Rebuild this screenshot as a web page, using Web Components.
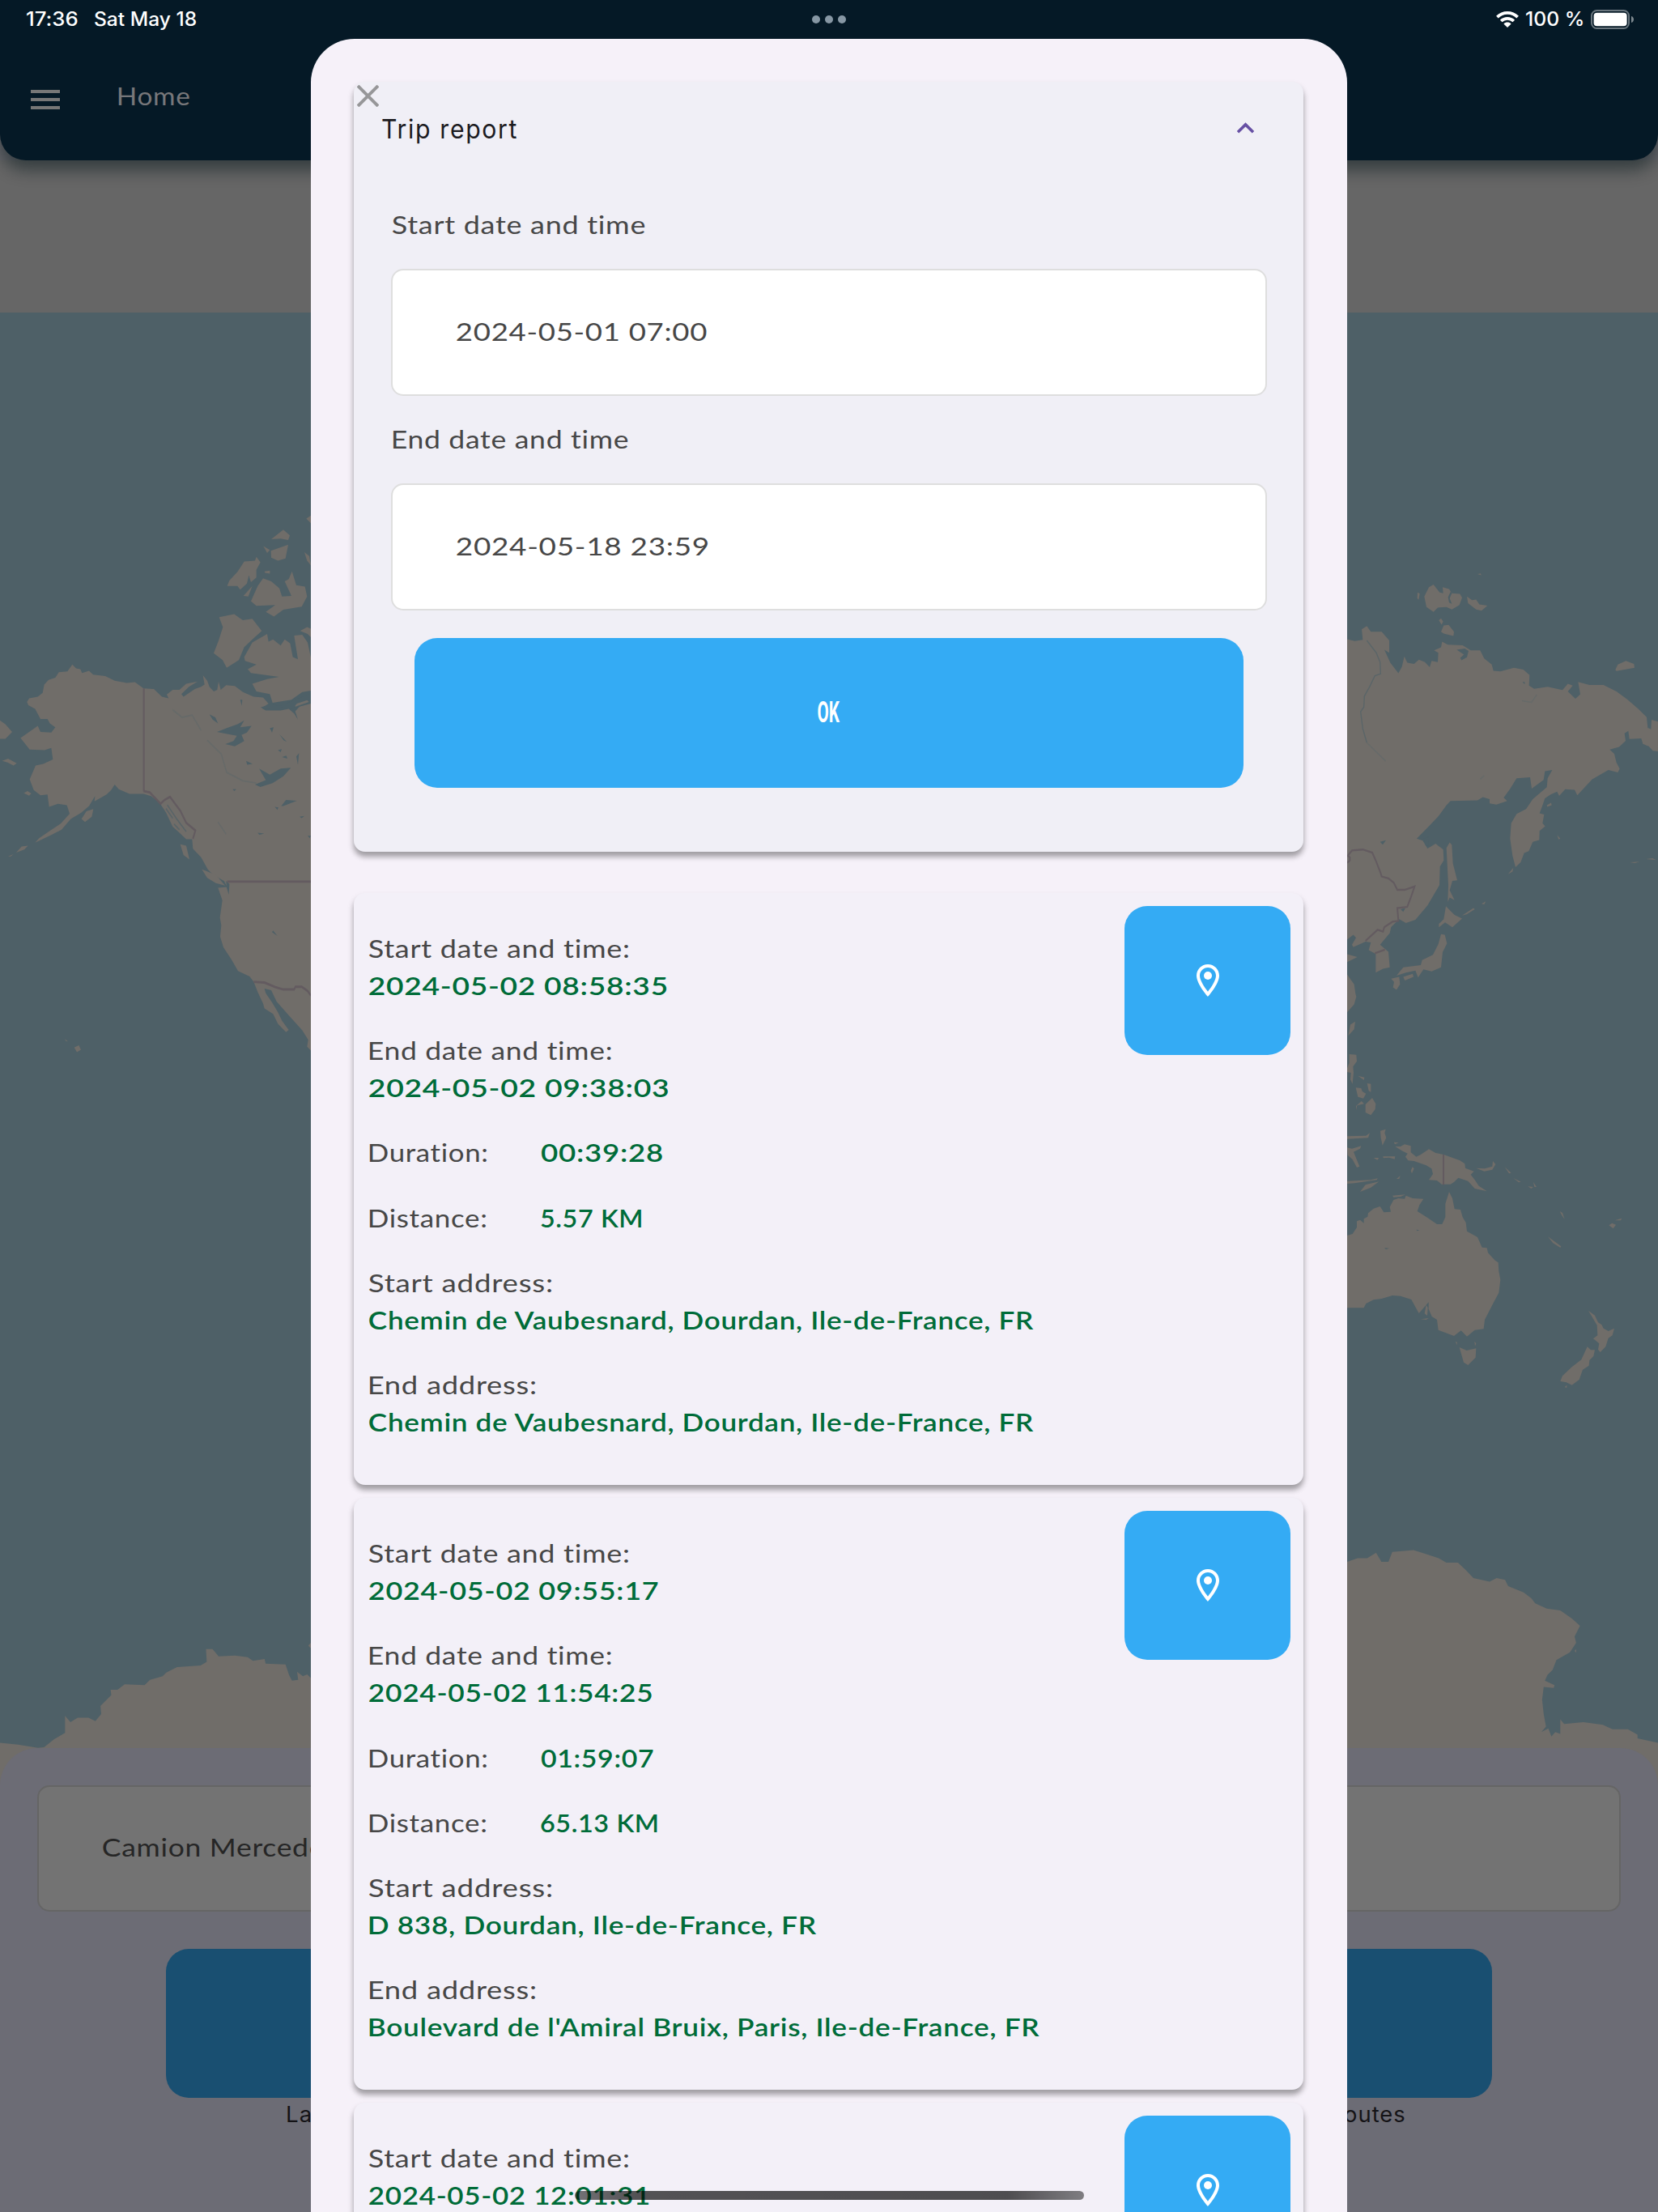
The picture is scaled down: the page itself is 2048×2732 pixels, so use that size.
<!DOCTYPE html>
<html lang="en">
<head>
<meta charset="utf-8">
<title>Trip report</title>
<style>
html,body{margin:0;padding:0}
body{width:2048px;height:2732px;overflow:hidden;font-family:Lato,"Open Sans",sans-serif;font-size:31px;line-height:46px;letter-spacing:.6px;font-variant-ligatures:none;color:#474747;background:#6c6c75}
</style>
</head>
<body>
<tracker-app></tracker-app>
<script>
const define = (name, html, setup) => {
  const tpl = document.createElement('template');
  tpl.innerHTML = html;
  customElements.define(name, class extends HTMLElement {
    connectedCallback() {
      if (this.shadowRoot) return;
      const root = this.attachShadow({ mode: 'open' });
      const view = tpl.content.cloneNode(true);
      view.querySelectorAll('[data-if]').forEach(n => {
        if (!this.hasAttribute(n.dataset.if)) n.remove();
      });
      view.querySelectorAll('[data-attr]').forEach(n => {
        n.textContent = this.getAttribute(n.dataset.attr) || '';
      });
      view.querySelectorAll('[data-w]').forEach(n => {
        n.setAttribute('w', this.getAttribute(n.dataset.w) || '');
      });
      root.append(view);
      if (setup) setup(this, root);
    }
  });
};

/* A line of text stretched so its ink spans exactly w pixels. */
define('fit-text', `
<style>
:host{display:block;white-space:nowrap;flex:none}
span{display:inline-block;transform-origin:0 50%;white-space:pre}
</style><span><slot></slot></span>`, (el, root) => {
  const w = parseFloat(el.getAttribute('w'));
  if (!w) return;
  const cs = getComputedStyle(el);
  const ctx = document.createElement('canvas').getContext('2d');
  ctx.font = `${cs.fontWeight} ${cs.fontSize} ${cs.fontFamily}`;
  const ls = parseFloat(cs.letterSpacing) || 0;
  ctx.letterSpacing = ls + 'px';
  const m = ctx.measureText(el.textContent);
  const ink = m.actualBoundingBoxLeft + m.actualBoundingBoxRight;
  const k = w / ink;
  el.style.width = w + 'px';
  root.querySelector('span').style.transform = `translateX(${m.actualBoundingBoxLeft * k}px) scaleX(${k})`;
});

define('status-bar', `
<style>
:host{display:flex;height:48px;align-items:center;justify-content:space-between;box-sizing:border-box;padding:0 29px 0 29px;
 font-family:Inter,sans-serif;font-weight:500;font-size:24px;line-height:48px;letter-spacing:0;color:#fff}
.l{display:flex;gap:21.5px;width:896.500px;padding-left:3.500px}
.r{display:flex;align-items:center;justify-content:flex-end;width:900px}
.r fit-text{margin:0 10px 0 9px}
.dots{display:flex;gap:6px}
.dots i{width:10px;height:10px;border-radius:50%;background:#8797a4}
svg{display:block}
</style>
<div class="l"><fit-text w="62.5">17:36</fit-text><fit-text w="125">Sat May 18</fit-text></div>
<div class="dots"><i></i><i></i><i></i></div>
<div class="r">
<svg width="28" height="20" viewBox="0 0 28 20" fill="none" stroke="#fff" stroke-width="3.8"><path d="M1.4 7.2C8.4.2 19.6.2 26.6 7.2"/><path d="M6.2 12c4.400-4.300 11.200-4.300 15.600 0"/><path d="M14 20l-4.600-4.600c2.600-2.400 6.600-2.400 9.200 0z" fill="#fff" stroke="none"/></svg>
<fit-text w="70.5">100 %</fit-text>
<svg width="54" height="24" viewBox="0 0 54 24"><rect x="1" y="1" width="46" height="22" rx="6.500" fill="none" stroke="#69757d" stroke-width="2"/><rect x="3.600" y="3.700" width="41" height="16.600" rx="4" fill="#fff"/><path d="M50 8c4 1 4 7 0 8z" fill="#7d888f"/></svg>
</div>`);

define('app-header', `
<style>
:host{display:block;position:relative;height:198px;background:#051926;border-radius:0 0 32px 32px;box-shadow:0 12px 20px rgba(0,18,24,.48)}
.row{display:flex;align-items:flex-start;padding:46.500px 0 0 38px;gap:71.500px}
svg{display:block;margin-top:16.500px}
fit-text{color:#77777a}
</style>
<status-bar></status-bar>
<div class="row">
<svg width="36" height="24" fill="#777"><rect width="36" height="4"/><rect y="10" width="36" height="4"/><rect y="20" width="36" height="4"/></svg>
<fit-text w="88.5">Home</fit-text></div>`);

define('world-map', `
<style>:host{display:block;height:1824px;background:#4e6067}svg{display:block}.b{fill:none;stroke:#635b60;stroke-width:6}.w{fill:#4e6067}.r{fill:none;stroke:#666a69;stroke-width:4}</style>
<svg width="2048" height="1824" viewBox="0 386 2048 1824" fill="#706d69">
<g transform="translate(0 600) scale(.33333 .47194)">
<path d="M100 566L108 556 140 552 158 542 164 520 180 508 205 502 218 488 250 486 268 468 282 478 298 480 304 490 330 484 345 494 390 498 425 510 470 516 500 514 532 530 570 532 600 552 625 556 618 546 640 534 665 534 690 518 732 512 700 526 672 545 680 552 722 532 745 526 758 520 752 496 768 510 776 526 792 538 805 534 810 512 818 534 838 522 870 524 900 540 940 552 975 554 995 570 970 582 985 588 1040 588 1070 584 1090 596 1104 612 1094 590 1110 578 1152 570 1152 1478 1138 1468 1142 1450 1120 1425 1070 1386 1025 1350 1005 1320 980 1316 985 1328 1008 1352 1030 1378 1045 1400 1070 1424 1060 1430 1030 1408 1012 1382 980 1368 975 1355 955 1325 940 1298 925 1284 882 1270 858 1240 828 1208 816 1180 820 1150 815 1130 824 1085 808 1052 842 1050 830 1034 790 1018 770 1004 745 972 715 950 712 925 690 925 660 905 640 892 615 855 590 828 560 812 532 806 480 806 440 794 425 782 412 796 395 808 350 826 352 812 330 838 300 856 262 872 228 900 190 914 160 924 130 934 145 922 182 904 225 884 258 858 248 836 215 832 182 840 176 808 150 810 125 796 110 768 132 732 160 728 196 716 190 686 165 692 110 690 76 660 105 646 140 628 150 644 190 646 205 632 185 622 176 610 150 610 130 584 105 574Z"/>
<path d="M812 344L868 336 900 352 935 348 970 380 935 402 905 422 885 456 840 476 825 456 792 438 810 405 826 370ZM905 448L935 410 990 388 995 408 1012 402 1040 418 1055 402 1075 412 1085 448 1104 454 1090 392 1120 390 1140 410 1152 450V536L1120 540 1080 560 1010 568 1000 545 950 538 935 518 990 506 1034 500 930 490 918 480 950 468 908 458ZM842 262L850 248 880 225 905 198 945 196 950 186 965 200 950 220 950 240 930 252 922 234 915 256 890 272 880 262ZM902 288L935 262 920 290ZM930 302L955 262 975 242 1005 250 1035 268 1045 290 1080 288 1055 250 1070 244 1082 224 1098 260 1130 264 1138 290 1118 316 1050 324 1015 342 985 330 1020 312 950 314ZM1005 140L1050 115 1074 130 1068 142 1040 138ZM976 158L1000 168 990 176ZM1004 170L1068 154 1058 190 1030 196 1005 188ZM1135 86L1152 78V98ZM1128 174L1146 184 1152 208 1138 196ZM1112 380L1138 370 1152 374V396L1140 388ZM980 224l20-2v8l-18-2zM1085 568L1130 555 1145 566 1095 578Z"/>
<path d="M0 614L20 624 45 644 20 662 0 662V692ZM8 720L30 714 62 726 50 732 28 724ZM88 804l14-5 14 6-8 6zM302 872L320 852 346 846 340 866 315 880ZM60 960L80 944 104 942 90 952ZM30 970l20-6-10 6zM0 974l12-2zM668 938L690 942 702 978 680 966ZM748 1004L800 1018 834 1046 800 1040 768 1026ZM275 1470L292 1464 300 1476 285 1482ZM240 1448l12 6-8-1zM260 1458l16 3zM210 1442l12 2z"/>
<path class="w" d="M804 644L840 634 880 624 905 614 890 632 932 628 915 646 895 652 905 668 870 682 835 676 865 668 878 654 830 648ZM945 782L985 770 960 740 1000 756 1040 740 1078 738 1050 760 1010 778 965 788ZM1042 838L1060 822 1100 824 1050 838ZM776 598l22 8 10 16-20-10zM912 720l24 8-20 2zM1035 650l28 20-12-4zM1000 634l14-2-6 14zM890 560l8 0-2 16zM1098 708l10-8-4 30zM1045 710l16-4 4 8zM1030 692l14-3-4 8zM1012 1164l16 14-20-10zM1018 840l14 2-4 6zM955 908l24 2-18 3zM1110 866l18-2-10 6zM1100 924l14 1zM862 794l14 0-8 5zM1070 896l20 6zM1140 916l12 0-4 6zM965 580l35-8 40 4 60-18 52-14v14l-52 12-15 14-40-4-60 4zM838 1034l12 8-2 28-8-18z"/>
<path class="r" d="M640 586L675 606 712 600 745 640M768 666L820 702 840 750 900 772 950 778M808 880L838 912"/>
<path d="M615 845L640 870M620 835L655 872 690 905M645 885L665 900" fill="none" stroke="#586468" stroke-width="4"/>
<path class="b" d="M533 530V800M842 1036H1152M940 1298L980 1300 1020 1312 1050 1318H1090L1095 1311 1118 1311 1140 1322 1152 1334"/>
<path class="b" d="M532 799L555 802 595 832 610 822 630 814 655 838 668 850 690 882 724 902 715 924"/>
</g>
<g transform="translate(1640 680) scale(.33333 .38265)">
<path d="M72 286L100 292 130 288 126 254 145 244 160 262 200 262 228 290 228 330 210 320 232 362 262 396 275 375 284 342 295 362 320 366 338 352 360 360 378 376 385 356 408 360 410 330 394 322 420 312 424 294 445 304 500 306 530 322 565 322 580 348 608 368 614 388 640 390 690 378 725 384 748 402 746 436 765 446 815 440 870 450 890 430 908 436 890 455 918 478 936 464 928 424 970 434 1022 434 1070 455 1110 480 1150 510 1182 538 1186 572 1198 576 1200 546 1224 552V648L1205 646 1190 632 1168 624 1162 606 1118 608 1114 582 1100 590 1104 614 1080 634 1045 642 1062 656 1070 684 1082 704 1075 716 1040 708 980 738 925 790 915 772 880 770 858 792 850 778 825 788 805 800 795 825 785 848 802 852 796 880 806 890 785 905 784 934 760 940 745 970 728 976 715 1006 696 1022 685 985 676 930 680 880 700 850 735 834 760 802 812 764 815 735 832 708 805 712 800 740 756 768 750 732 700 735 675 770 652 798 665 808 625 820 600 816 600 802 575 796 555 806 455 808 440 822 410 858 380 885 330 930 352 936 370 962 400 946 428 965 430 1000 416 1020 414 1080 370 1145 325 1192 290 1202 265 1190 235 1215 230 1235 194 1272 225 1295 230 1345 205 1350 178 1362 178 1302 152 1290 160 1265 140 1262 95 1280 90 1272 105 1250 95 1240 72 1256Z"/>
<path d="M72 1303L110 1312 72 1328ZM72 1368L98 1400 103 1430 106 1440 98 1465 72 1490ZM84 1530L102 1520 98 1545 76 1566ZM358 148L375 118 392 110 415 135 428 138 426 118 450 124 460 138 490 140 498 152 488 176 460 190 440 182 408 184 392 198 366 182ZM516 148L535 160 550 158 562 174 592 178 570 194 550 190 520 170ZM420 262L430 242 448 240 468 262 466 276 430 268ZM412 225l8-6 8 10-6 10zM333 135l8 4-4 20-5-5zM555 76l12-2 2 6zM330 225l18 14zM1066 385L1075 368 1105 356 1135 366 1137 378 1100 384 1070 389ZM452 942L460 950 464 1010 480 1064 462 1066 452 1096 470 1128 452 1120 445 1134 447 1080 440 960ZM438 1148L470 1176 498 1188 462 1216 435 1200 412 1216 412 1205 430 1190ZM420 1238L434 1240 442 1268 426 1296 420 1345 385 1358 355 1352 335 1378 325 1356 290 1362 255 1372 280 1345 345 1338 350 1322 390 1305 410 1270ZM280 1376L315 1366 318 1376 286 1388ZM235 1382L265 1376 268 1400 255 1418 242 1410 246 1392ZM498 1178L540 1154 545 1158 515 1174ZM570 1140l16-8-6 10zM668 1045L688 1024 685 1036ZM812 822l16-8 2 8-16 5zM850 918l12 12-6 2zM965 976l14 12zM1040 1000l20 3zM1120 1006l36-2-18 5zM1180 996l24-3 14 6z"/>
<path class="w" d="M478 320l30-4 14 8-6 20-20 10-5-8 14-10zM446 150l10-18 4 6-8 16 8 18-10-4zM194 940l22-5-12 14zM355 930l20-6-2 30-10-2zM722 424l8 0 0 8zM270 1158l18-4-8 12z"/>
<path class="r" style="stroke:#5a6568" d="M145 290L180 330 194 360 196 398 175 404 155 440 136 470 134 505 122 520 130 575 145 620"/>
<path class="r" d="M145 620L215 680M720 485L755 490 775 465M565 738L580 726"/>
<path class="b" d="M72 1008L82 1000 82 990 74 985 90 968 130 965 165 975 178 1000 195 1038 200 1052 225 1058 245 1072 258 1095 285 1095 322 1084 310 1115 295 1150 258 1154 262 1195 240 1198 210 1215 205 1230 185 1224 140 1260M175 1300L212 1288"/>
</g>
<g transform="translate(1640 1280) scale(.33333)">
<path d="M72 738L92 732 108 708 108 685 120 680 134 692 134 676 148 668 150 655 170 638 194 630 208 652 234 650 230 632 244 606 262 600 285 602 290 590 315 600 355 602 340 625 332 648 370 672 405 696 424 696 436 670 436 620 450 576 462 600 470 640 492 642 500 670 512 690 516 722 555 744 572 782 590 784 594 802 620 830 632 838 634 870 640 902 634 950 610 995 582 1050 578 1084 545 1088 516 1112 494 1090 468 1110 410 1088 405 1050 386 1038 374 1010 374 985 338 1026 328 1008 310 975 270 962 240 960 200 972 170 976 142 990 134 1006 72 1006ZM488 1152L515 1164 550 1156 548 1190 520 1218 504 1208ZM966 1016L990 1034 1002 1060 1015 1068 1022 1082 1040 1092 1062 1082 1055 1108 1040 1118 1030 1150 1010 1170 1002 1160 1006 1138 984 1120 1000 1108 998 1070ZM962 1150L975 1162 990 1162 985 1185 970 1200 968 1220 945 1235 932 1272 905 1292 884 1282 862 1278 870 1258 905 1225 940 1198ZM250 408L270 408 285 400 308 406 308 430 328 446 345 438 375 418 400 432 430 438 490 460 508 472 510 488 542 500 530 512 545 532 560 554 590 574 545 564 520 536 484 524 468 540 455 548 422 548 405 534 375 532 390 510 385 490 365 478 320 462 298 460 288 446 296 434 275 424ZM550 488L582 490 610 482 612 462 622 474 610 494 580 500ZM80 66L106 68 108 92 94 112 96 135 92 176 84 160 86 135 72 132V118L80 98ZM140 252L165 228 178 250 176 270 160 292 140 282ZM104 190l20 2 4 12 14 8-10 18-20-6zM146 174l14 2 0 30-8-4zM105 258l20-18 10 10-26 6-4 18zM112 146l24 6-2 10zM72 370L142 368 156 358 150 376 72 380ZM72 412L90 416 124 406 120 416 96 428 118 482 108 486 92 456 74 440ZM72 536L160 532 185 526 182 532 100 544 72 546ZM120 576L140 550 190 538 160 560ZM170 450l20 0-6 8zM205 445l45 0-2 10-20-6-22 2zM195 350l20-6-4 14 6 18-14 28-6-28zM195 416l14 2zM145 424l34 4zM245 392l18 2-14 6zM240 590l48-4-18 8-26 2zM308 498l6-14 6 6-8 18zM255 528l14-12-4 12zM656 484L680 506 672 508ZM688 525l28 14-8 2zM720 522l28 14zM742 556l20 2-8 6zM762 540l12 18-8 0zM776 572l12 4zM582 436l20 6zM520 428l14 2zM860 648l10 6 8 24-12-18zM816 742L865 778 862 783 835 766ZM1042 700l12-8 14 6-10 14zM1064 682l26-8-4 8zM345 1048l30-4-10 6zM365 995l6 10-2 30-10-8zM474 1130l6 4-2 10zM544 1130l6 8-4 10zM878 1300l8-8 0 10z"/>
<path class="w" d="M328 716l12 2-8 3zM210 784l18 1-12 4zM352 888l18 4zM360 912l14 1zM360 938l14 2zM322 957l26 5zM400 939l12 2z"/>
<path class="b" d="M429 438V550"/>
</g>
<g transform="translate(0 1860) scale(.44643 .55617)">
<path d="M0 526L50 530 105 537 122 536 150 518 180 504 180 466 195 480 215 470 245 470 264 478 280 462 278 444 308 420 306 408 325 408 345 396 400 398 415 386 450 378 460 370 490 358 555 354 572 346 570 318 588 318 605 334 650 332 685 336 700 344 732 340 735 350 790 352 800 376 808 388 825 386 822 368 838 378 850 374 860 382V700H0ZM853 310l7-6v12z"/>
</g>
<g transform="translate(1300 1860) scale(.47704 .55617)">
<path d="M763 124L790 116 815 116 838 104 852 124 870 124 880 102 935 98 965 106 1000 116 1020 126 1050 126 1070 142 1090 160 1132 168 1150 160 1172 164 1180 178 1220 192 1240 205 1250 216 1280 228 1315 232 1345 250 1366 266 1352 290 1356 304 1340 325 1305 342 1295 364 1282 375 1275 388 1300 398 1298 404 1272 402 1268 430 1272 462 1278 490 1266 502 1284 494 1292 512 1302 502 1315 506 1315 474 1325 484 1375 480 1425 486 1450 496 1490 496 1515 508 1515 516 1568 526V700H763ZM1352 322l4-4 0 8z"/>
</g>
</svg>`);

define('vehicle-panel', `
<style>
:host{display:flex;flex-direction:column;position:relative;box-sizing:border-box;height:573px;margin-top:-51px;padding:45.500px 46px 0;border-radius:46px 46px 0 0;background:#6c6c75}
.f{display:flex;align-items:center;box-sizing:border-box;height:156px;border:2px solid #656565;border-radius:15px;background:#737373;padding:0 0 4px 79px;color:#262626}
.b{display:flex;justify-content:space-between;margin:46px 159px 0;height:184px}
.b i{width:700px;border-radius:28px;background:#194f71}
.t{display:flex;padding:0 0 0 309px;gap:1277px;font-family:Inter,sans-serif;font-size:27px;line-height:42px;letter-spacing:1px;color:#141316}
</style>
<div class="f"><fit-text w="273">Camion Mercede</fit-text></div>
<div class="b"><i></i><i></i></div>
<div class="t"><fit-text w="29">La</fit-text><fit-text w="73.5">outes</fit-text></div>`);

define('date-field', `
<style>
:host{display:block}
.l{padding-left:1.500px}
.i{display:flex;align-items:center;box-sizing:border-box;height:156.500px;margin-top:32px;border:2px solid #dedede;border-radius:15px;background:#fff;padding:0 0 3px 79px}
</style>
<fit-text class="l" data-w="lw" data-attr="label"></fit-text>
<div class="i"><fit-text data-w="vw" data-attr="value"></fit-text></div>`);

define('action-button', `
<style>
:host{display:flex;align-items:center;justify-content:center;height:184.500px;border-radius:28px;background:#34abf4;color:#fff;font:700 36px/46px Roboto,sans-serif;letter-spacing:0}
</style><slot></slot>`);

define('surface-card', `
<style>
:host{display:block;box-sizing:border-box;border-radius:14px;background:var(--surface,#f3f0f8);box-shadow:0 6px 6px rgba(0,0,0,.27),0 5px 10px rgba(0,0,0,.12)}
</style><slot></slot>`);

define('report-form', `
<style>
:host{display:block}
surface-card{--surface:#f0eff6;height:951px;padding:35.500px 45.500px 0 46px}
.h{display:flex;align-items:center;justify-content:space-between;margin:0 5px 71.500px -11px;height:46px;font-family:Inter,sans-serif;font-size:32px;letter-spacing:1.800px;color:#1c1b1f}
svg{display:block;margin-top:-2px}
date-field+date-field{margin-top:30.500px}
action-button{margin:34.500px 28.500px 0}
action-button fit-text{margin:-1px 0 0 0}
</style>
<surface-card>
<div class="h"><fit-text w="166">Trip report</fit-text><svg width="43" height="43" viewBox="0 0 24 24" fill="#6750a4"><path d="M7.410 15.410L12 10.830l4.590 4.580L18 14l-6-6-6 6z"/></svg></div>
<date-field label="Start date and time" lw="312" value="2024-05-01 07:00" vw="309.5"></date-field>
<date-field label="End date and time" lw="291" value="2024-05-18 23:59" vw="311"></date-field>
<action-button><fit-text w="27.5">OK</fit-text></action-button>
</surface-card>`);

define('trip-card', `
<style>
:host{display:block}
surface-card{position:relative;height:731.500px;padding:45.500px 17.500px 0 18.300px}
.c{display:flex;flex-direction:column;gap:34.200px}
.row{display:flex}
.row .k{width:212px}
.v{color:#006c39;font-weight:600}
action-button{position:absolute;top:16px;right:16px;width:205px}
svg{display:block}
</style>
<surface-card>
<div class="c">
<div data-if="start"><fit-text w="320">Start date and time:</fit-text><fit-text class="v" data-w="sw" data-attr="start"></fit-text></div>
<div data-if="end"><fit-text w="298.5">End date and time:</fit-text><fit-text class="v" data-w="ew" data-attr="end"></fit-text></div>
<div data-if="duration" class="row"><div class="k"><fit-text w="145">Duration:</fit-text></div><fit-text class="v" data-w="duw" data-attr="duration"></fit-text></div>
<div data-if="distance" class="row"><div class="k"><fit-text w="144">Distance:</fit-text></div><fit-text class="v" data-w="diw" data-attr="distance"></fit-text></div>
<div data-if="from"><fit-text w="225">Start address:</fit-text><fit-text class="v" data-w="fw" data-attr="from"></fit-text></div>
<div data-if="to"><fit-text w="205">End address:</fit-text><fit-text class="v" data-w="tw" data-attr="to"></fit-text></div>
</div>
<action-button><svg width="48" height="48" viewBox="0 0 24 24" fill="#fff"><path d="M12 2C8.130 2 5 5.130 5 9c0 5.250 7 13 7 13s7-7.750 7-13c0-3.870-3.130-7-7-7zM7 9c0-2.760 2.240-5 5-5s5 2.240 5 5c0 2.880-2.880 7.190-5 9.880C9.920 16.210 7 11.850 7 9z"/><circle cx="12" cy="9" r="2.500"/></svg></action-button>
</surface-card>`);

define('report-sheet', `
<style>
:host{display:block;position:relative;box-sizing:border-box;overflow:hidden;border-radius:54px 54px 0 0;background:#f6f1f9;padding:53px 53.600px 0 53.400px}
.list{display:flex;flex-direction:column;gap:15.700px;margin-top:50.500px}
.x{position:absolute;left:56.500px;top:56.500px}
</style>
<report-form></report-form>
<div class="list"><slot></slot></div>
<svg class="x" width="27" height="27" viewBox="0 0 27 27" stroke="#979799" stroke-width="4"><path d="M1 1L26 26M26 1L1 26"/></svg>`);

define('tracker-app', `
<style>
:host{display:block;position:relative;width:2048px;height:2732px;overflow:hidden;background:linear-gradient(#66666b 198px,#666 198px)}
.gap{height:188px}
report-sheet{position:absolute;left:384px;top:48px;width:1280px;height:2684px}
.home{position:absolute;left:710px;top:2706px;width:629px;height:11px;border-radius:6px;background:linear-gradient(to right,rgba(0,0,0,.52),rgba(0,0,0,.66) 12%,rgba(0,0,0,.68) 85%,rgba(0,0,0,.48))}
</style>
<app-header></app-header>
<div class="gap"></div>
<world-map></world-map>
<vehicle-panel></vehicle-panel>
<report-sheet>
<trip-card start="2024-05-02 08:58:35" sw="368" end="2024-05-02 09:38:03" ew="369.5" duration="00:39:28" duw="150" distance="5.57 KM" diw="124.5" from="Chemin de Vaubesnard, Dourdan, Ile-de-France, FR" fw="822" to="Chemin de Vaubesnard, Dourdan, Ile-de-France, FR" tw="822"></trip-card>
<trip-card start="2024-05-02 09:55:17" sw="356.5" end="2024-05-02 11:54:25" ew="349.5" duration="01:59:07" duw="138.5" distance="65.13 KM" diw="144" from="D 838, Dourdan, Ile-de-France, FR" fw="552.5" to="Boulevard de l'Amiral Bruix, Paris, Ile-de-France, FR" tw="828"></trip-card>
<trip-card start="2024-05-02 12:01:31" sw="345"></trip-card>
</report-sheet>
<div class="home"></div>`);
</script>
</body>
</html>
